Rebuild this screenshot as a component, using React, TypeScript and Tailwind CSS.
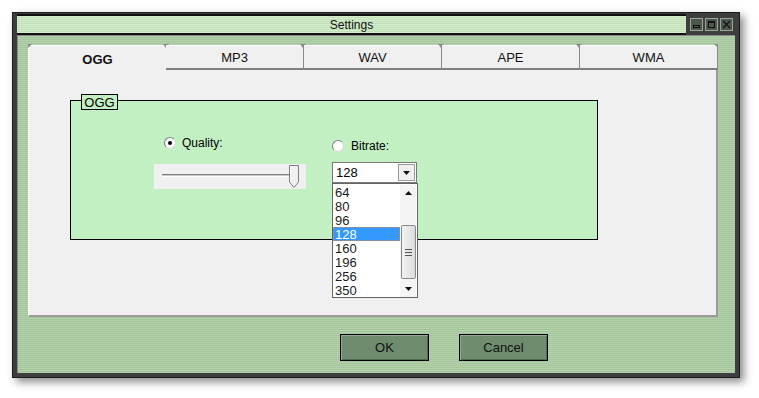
import React from "react";

const tabs = ["OGG", "MP3", "WAV", "APE", "WMA"];
const bitrates = ["64", "80", "96", "128", "160", "196", "256", "350"];

function Radio({ checked }: { checked?: boolean }) {
  return (
    <span className="flex h-[12px] w-[12px] items-center justify-center rounded-full border border-t-[#808080] border-l-[#808080] border-r-[#d8d8d8] border-b-[#d8d8d8] bg-white">
      {checked ? <span className="h-[4px] w-[4px] rounded-full bg-black" /> : null}
    </span>
  );
}

function TitleButton({ kind }: { kind: "min" | "max" | "close" }) {
  return (
    <div className="flex h-[13px] w-[13px] items-center justify-center border border-[#9aa69a] bg-[#4c584c]">
      <svg width="9" height="9" viewBox="0 0 9 9">
        {kind === "min" && (
          <rect x="1.5" y="5.5" width="6" height="2" fill="none" stroke="#111" strokeWidth="1" />
        )}
        {kind === "max" && (
          <>
            <rect x="1.5" y="1.5" width="6" height="6" fill="none" stroke="#111" strokeWidth="1" />
            <rect x="1.5" y="1.5" width="6" height="1.5" fill="#111" />
          </>
        )}
        {kind === "close" && (
          <path d="M1 1 L8 8 M8 1 L1 8" stroke="#111" strokeWidth="1.2" />
        )}
      </svg>
    </div>
  );
}

function Arrow({ dir, size = 7 }: { dir: "up" | "down"; size?: number }) {
  const h = Math.ceil(size / 2);
  return (
    <svg width={size} height={h} viewBox={`0 0 ${size} ${h}`}>
      {dir === "down" ? (
        <polygon points={`0,0 ${size},0 ${size / 2},${h}`} fill="#111" />
      ) : (
        <polygon points={`0,${h} ${size},${h} ${size / 2},0`} fill="#111" />
      )}
    </svg>
  );
}

export default function App() {
  return (
    <div className="h-[398px] w-[759px] overflow-hidden bg-white pl-[12px] pt-[12px] font-['Liberation_Sans',Arial,sans-serif] text-[12px] text-black">
      <div className="flex h-[366px] w-[728px] flex-col border border-[#1c1c1c] bg-[#3e3e3e] px-[4px] pb-[4px] pt-[1px] shadow-[4px_4px_8px_rgba(0,0,0,0.45)]">
        {/* title row */}
        <div className="flex h-[21px] items-center">
          <div className="flex h-full flex-1 items-center justify-center border-y-2 border-[#101010] bg-[repeating-linear-gradient(180deg,#d4eecc_0px,#d4eecc_1px,#c0dfb8_1px,#c0dfb8_2px)]">
            <span className="text-[12px] text-[#111]">Settings</span>
          </div>
          <div className="ml-[4px] mr-[2px] flex gap-[2px]">
            <TitleButton kind="min" />
            <TitleButton kind="max" />
            <TitleButton kind="close" />
          </div>
        </div>

        {/* body */}
        <div className="flex flex-1 flex-col border-l border-t border-[#8a8a8a] bg-[repeating-linear-gradient(180deg,#b3d1ab_0px,#b3d1ab_1px,#a5c59d_1px,#a5c59d_2px)] pl-[10px] pt-[9px]">
          {/* tabs */}
          <div className="grid h-[22px] w-[690px] grid-cols-5">
            {tabs.map((tab, i) => {
              const active = i === 0;
              return (
                <div
                  key={tab}
                  className={
                    active
                      ? "relative flex items-center justify-center border-l border-t border-white bg-[#f0f0f0] pt-[4px] text-[13px] font-bold text-[#111]"
                      : "relative flex items-center justify-center border-b-2 border-r border-t border-b-[#808080] border-r-[#8a8a8a] border-t-white bg-[#f0f0f0] pt-[1px] text-[13px] text-[#111]"
                  }
                >
                  {tab}
                  {i < 4 ? (
                    <span className="absolute -right-[3px] -top-[2px] h-0 w-0 border-x-[3px] border-t-[4px] border-x-transparent border-t-[#8a8a8a]" />
                  ) : (
                    <span className="absolute -right-[1px] -top-[2px] h-0 w-0 border-l-[4px] border-t-[4px] border-l-transparent border-t-[#8a8a8a]" />
                  )}
                  {active ? (
                    <span className="absolute -left-[1px] -top-[2px] h-0 w-0 border-r-[4px] border-t-[4px] border-r-transparent border-t-[#8a8a8a]" />
                  ) : null}
                </div>
              );
            })}
          </div>

          {/* panel */}
          <div className="h-[250px] w-[690px] border-b-2 border-l border-r-2 border-b-[#9a9a9a] border-l-white border-r-[#9a9a9a] bg-[#f0f0f0] pl-[41px] pt-[33px]">
            <div className="relative flex h-[140px] w-[528px] border border-black bg-[#c2f0c2]">
              <div className="absolute left-[10px] top-[-7px] flex h-[16px] w-[37px] items-center justify-center border border-black bg-[#c2f0c2] text-[13px] leading-none">
                OGG
              </div>

              {/* quality column */}
              <div className="ml-[83px] mt-[36px] flex w-[152px] flex-col">
                <div className="flex h-[12px] items-center gap-[6px] pl-[10px]">
                  <Radio checked />
                  <span className="text-[12px] leading-none">Quality:</span>
                </div>
                <div className="relative mt-[15px] h-[25px] w-[152px] bg-[#f0f0f0] pl-[8px] pt-[10px]">
                  <div className="h-[3px] w-[136px] border-b border-t border-b-white border-t-[#808080] bg-[#c8c8c8]" />
                  <svg className="absolute left-[135px] top-[1px]" width="10" height="23" viewBox="0 0 10 23">
                    <path d="M0.5 0.5 H9.5 V17 L5 22.5 L0.5 17 Z" fill="#f0f0f0" stroke="#808080" />
                    <path d="M1.5 1.5 V16.5" stroke="#fff" />
                  </svg>
                </div>
              </div>

              {/* bitrate column */}
              <div className="ml-[26px] mt-[39px] flex flex-col">
                <div className="flex h-[12px] items-center gap-[7px]">
                  <Radio />
                  <span className="text-[12px] leading-none">Bitrate:</span>
                </div>
                <div className="relative mt-[10px] flex h-[21px] w-[85px] items-center border border-[#7a7a7a] bg-white">
                  <span className="flex-1 pl-[3px] text-[13px] leading-none">128</span>
                  <div className="mr-[1px] flex h-[17px] w-[17px] items-center justify-center border border-[#9a9a9a] bg-[#f0f0f0]">
                    <Arrow dir="down" size={7} />
                  </div>

                  {/* dropdown list */}
                  <div className="absolute left-[-1px] top-[20px] z-10 flex h-[115px] w-[86px] border border-[#646464] bg-white pt-[1px]">
                    <div className="flex w-[67px] flex-col">
                      {bitrates.map((b) => (
                        <div
                          key={b}
                          className={
                            b === "128"
                              ? "h-[14px] bg-[#3399ff] pl-[2px] text-[13px] leading-[15px] text-white outline-1 -outline-offset-1 outline-dotted outline-[#c88a4a]"
                              : "h-[14px] pl-[2px] text-[13px] leading-[15px] text-[#1a1a1a]"
                          }
                        >
                          {b}
                        </div>
                      ))}
                    </div>
                    <div className="flex w-[16px] flex-col bg-[#f4f4f4]">
                      <div className="flex h-[16px] items-center justify-center">
                        <Arrow dir="up" size={7} />
                      </div>
                      <div className="flex flex-1 flex-col items-center">
                        <div className="mt-[24px] flex h-[54px] w-[15px] flex-col items-center justify-center gap-[2px] rounded-[2px] border border-[#8a8a8a] bg-[linear-gradient(90deg,#f2f2f2,#dcdcdc)]">
                          <span className="h-px w-[7px] bg-[#555]" />
                          <span className="h-px w-[7px] bg-[#555]" />
                          <span className="h-px w-[7px] bg-[#555]" />
                        </div>
                      </div>
                      <div className="flex h-[16px] items-center justify-center">
                        <Arrow dir="down" size={7} />
                      </div>
                    </div>
                  </div>
                </div>
              </div>
            </div>
          </div>

          {/* buttons */}
          <div className="mt-[17px] flex gap-[30px] pl-[312px]">
            <button className="flex h-[27px] w-[89px] items-center justify-center border border-black bg-[#6f8c6f] text-[13px] text-[#111] shadow-[inset_1px_1px_0_#8fa88f,inset_-1px_-1px_0_#4f6a4f]">
              OK
            </button>
            <button className="flex h-[27px] w-[89px] items-center justify-center border border-black bg-[#6f8c6f] text-[13px] text-[#111] shadow-[inset_1px_1px_0_#8fa88f,inset_-1px_-1px_0_#4f6a4f]">
              Cancel
            </button>
          </div>
        </div>
      </div>
    </div>
  );
}
